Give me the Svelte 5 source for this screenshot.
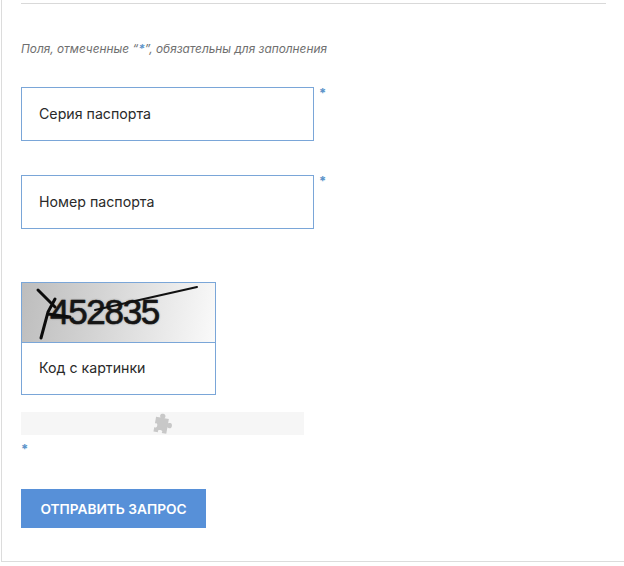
<script>
  const fields = ['Серия паспорта', 'Номер паспорта'];
</script>

<div class="card">
  <hr class="rule" />
  <p class="note">Поля, отмеченные “<span class="mark">*</span>”, обязательны для заполнения</p>

  {#each fields as f}
    <div class="field">
      <div class="input">{f}</div>
      <span class="star">*</span>
    </div>
  {/each}

  <div class="captcha">
    <div class="cap-img">
      <span class="cap-text">452835</span>
      <svg class="cap-lines" width="194" height="59" viewBox="0 0 194 59" aria-hidden="true">
        <path d="M16 7 L33 24 M33 16 L26 29 L19 55 M26 31 L48 34" fill="none" stroke="#0c0c0c" stroke-width="3" stroke-linecap="round" />
        <path d="M73 27 L175 4" fill="none" stroke="#111" stroke-width="2" stroke-linecap="round" />
      </svg>
    </div>
    <div class="cap-input">Код с картинки</div>
  </div>

  <div class="plugin">
    <svg class="puzzle" width="21" height="21" viewBox="0 0 21 21" aria-hidden="true">
      <path fill="#c8c8c8" d="M3 5h4.500C7 4.300 6.800 3.700 6.800 3 6.800 1.600 8 .8 9.500.8s2.700.8 2.700 2.200c0 .7-.2 1.300-.7 2H16v4.300c.7-.5 1.300-.7 2-.7 1.400 0 2.200 1.200 2.200 2.700s-.8 2.700-2.200 2.700c-.7 0-1.300-.2-2-.7V20h-4.700c.3-.5.400-.9.400-1.300 0-.9-.9-1.400-2.200-1.400s-2.200.5-2.200 1.400c0 .4.100.8.400 1.300H3v-4.700c.5.300.9.400 1.300.4.900 0 1.400-.9 1.400-2.200s-.5-2.200-1.400-2.200c-.4 0-.8.100-1.300.4z" />
    </svg>
  </div>
  <div class="lone-star">*</div>

  <button class="submit" type="button">ОТПРАВИТЬ ЗАПРОС</button>
</div>

<style>
  :global(body) {
    margin: 0;
    background: #fff;
  }
  .card {
    box-sizing: border-box;
    width: 623px;
    height: 562px;
    margin-left: 1px;
    padding: 3px 18px 0 19px;
    border-left: 1px solid #dcdcdc;
    border-bottom: 1px solid #dcdcdc;
    font-family: "Inter", "Noto Sans", sans-serif;
    color: #2a2a2a;
  }
  .rule {
    margin: 0;
    border: 0;
    border-top: 1px solid #d9d9d9;
  }
  .note {
    margin: 37px 0 0;
    font-size: 11.85px;
    line-height: 16px;
    font-style: italic;
    color: #6f6f6f;
  }
  .mark {
    color: #5b93c9;
    font-weight: 700;
  }
  .field {
    display: flex;
    align-items: flex-start;
    margin-top: 30px;
  }
  .field + .field {
    margin-top: 34px;
  }
  .input {
    box-sizing: border-box;
    width: 293px;
    height: 54px;
    padding: 0 0 2px 17px;
    display: flex;
    align-items: center;
    border: 1px solid #7aa6d8;
    font-size: 14.2px;
  }
  .star {
    margin-left: 5px;
    color: #5b93c9;
    font-size: 13px;
    font-weight: 700;
    line-height: 12px;
  }
  .captcha {
    box-sizing: border-box;
    width: 195px;
    margin-top: 53px;
    border: 1px solid #7aa6d8;
  }
  .cap-img {
    position: relative;
    height: 59px;
    overflow: hidden;
    border-bottom: 1px solid #7aa6d8;
    background: linear-gradient(100deg, #bdbdbd 0%, #d4d4d4 40%, #fafafa 100%);
  }
  .cap-text {
    position: absolute;
    left: 28px;
    top: 9px;
    font-family: "Liberation Sans", sans-serif;
    font-size: 35px;
    line-height: 40px;
    letter-spacing: -1.3px;
    color: #151515;
    -webkit-text-stroke: 0.6px #151515;
    text-shadow: 0 0 2px #666;
  }
  .cap-lines {
    position: absolute;
    left: 0;
    top: 0;
  }
  .cap-input {
    box-sizing: border-box;
    height: 51px;
    padding: 0 0 3px 17px;
    display: flex;
    align-items: center;
    font-size: 14.2px;
  }
  .plugin {
    width: 283px;
    height: 23px;
    margin-top: 17px;
    display: flex;
    align-items: center;
    justify-content: center;
    background: #f6f6f6;
  }
  .puzzle {
    transform: rotate(10deg);
  }
  .lone-star {
    margin-top: 8px;
    color: #5b93c9;
    font-size: 13px;
    font-weight: 700;
    line-height: 12px;
  }
  .submit {
    display: block;
    width: 185px;
    height: 39px;
    margin-top: 34px;
    padding: 0;
    border: 0;
    background: #5790d8;
    color: #fff;
    font-family: "Inter", "Noto Sans", sans-serif;
    font-size: 13.7px;
    font-weight: 600;
  }
</style>
